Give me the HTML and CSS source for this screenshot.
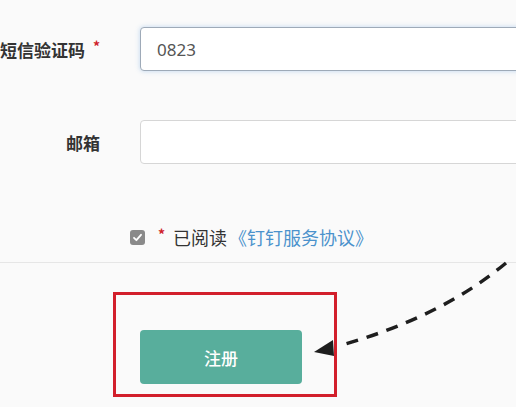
FILE: index.html
```html
<!DOCTYPE html>
<html lang="zh-CN">
<head>
  <meta charset="UTF-8">
  <title>注册</title>
  <link rel="stylesheet" href="styles.css">
</head>
<body>

  <!-- FORM -->
  <div class="page">
    <div class="form">
      <div class="row">
        <label class="label">短信验证码<span class="req">*</span></label>
        <input class="input input-focus" type="text" value="0823">
      </div>
      <div class="row">
        <label class="label">邮箱</label>
        <input class="input" type="text">
      </div>
      <div class="agree">
        <span class="check">
          <svg width="11" height="11" viewBox="0 0 11 11"><path d="M2 5.8 L4.4 8.2 L9 2.8" fill="none" stroke="#fff" stroke-width="1.8" stroke-linecap="round" stroke-linejoin="round"/></svg>
        </span>
        <span class="req req-small">*</span>
        <span class="agree-text">已阅读</span>
        <a class="agree-link" href="#">《钉钉服务协议》</a>
      </div>
    </div>

    <div class="divider"></div>

    <div class="actions">
      <button class="btn-register">注册</button>
    </div>

    <!-- annotation -->
    <div class="mark-box"></div>
    <svg class="mark-arrow" width="516" height="407" viewBox="0 0 516 407">
      <path d="M506 263 Q440 318 338 346" fill="none" stroke="#1e1e1e" stroke-width="3.5" stroke-dasharray="12 9"/>
      <polygon points="314,352 333,340 334,356" fill="#1e1e1e"/>
    </svg>
  </div>

</body>
</html>
```

FILE: styles.css
```css
body {
  margin: 0;
  background-color: #fafafa;
  font-family: "Noto Sans CJK SC", "Noto Sans", sans-serif;
  color: #333;
}

.page {
  position: relative;
  width: 516px;
  height: 407px;
  overflow: hidden;
}

/* FORM */
.form {
  padding-top: 27px;
}

.row {
  display: flex;
  align-items: center;
  gap: 40px;
  height: 44px;
  margin-bottom: 49px;
}

.label {
  display: flex;
  align-items: center;
  justify-content: flex-end;
  width: 100px;
  flex-shrink: 0;
  font-size: 17px;
  font-weight: bold;
  white-space: nowrap;
}

.label .req {
  margin-left: 8px;
  width: 8px;
}

.req {
  color: #cf1f2c;
  font-weight: bold;
  font-size: 14px;
  position: relative;
  top: -3px;
}

.input {
  flex-shrink: 0;
  width: 420px;
  height: 44px;
  box-sizing: border-box;
  padding: 0 16px;
  border: 1px solid #d6d6d6;
  border-radius: 4px;
  background: #fff;
  font-family: "Noto Sans", sans-serif;
  font-size: 17px;
  color: #555;
  outline: none;
}

.input-focus {
  border-color: #9eaab8;
  box-shadow: 0 0 5px rgba(120, 170, 225, 0.45);
}

.agree {
  display: flex;
  align-items: center;
  margin: 61px 0 0 130px;
  height: 24px;
  font-size: 18px;
}

.check {
  display: flex;
  align-items: center;
  justify-content: center;
  width: 15px;
  height: 15px;
  border-radius: 3px;
  background-color: #8a8a8a;
  margin-right: 13px;
}

.req-small {
  margin-right: 8px;
}

.agree-text {
  color: #333;
}

.agree-link {
  color: #4b92cc;
  text-decoration: none;
  margin-left: 2px;
}

.divider {
  margin-top: 13px;
  height: 1px;
  background-color: #e6e6e6;
}

.actions {
  padding: 67px 0 0 140px;
}

.btn-register {
  width: 162px;
  height: 54px;
  border: none;
  border-radius: 4px;
  background-color: #58ae9c;
  color: #fff;
  font-family: "Noto Sans CJK SC", sans-serif;
  font-size: 17px;
  font-weight: 500;
  cursor: pointer;
}

/* annotation overlay */
.mark-box {
  position: absolute;
  left: 113px;
  top: 292px;
  width: 218px;
  height: 99px;
  border: 3px solid #d21f2b;
}

.mark-arrow {
  position: absolute;
  left: 0;
  top: 0;
}
```
